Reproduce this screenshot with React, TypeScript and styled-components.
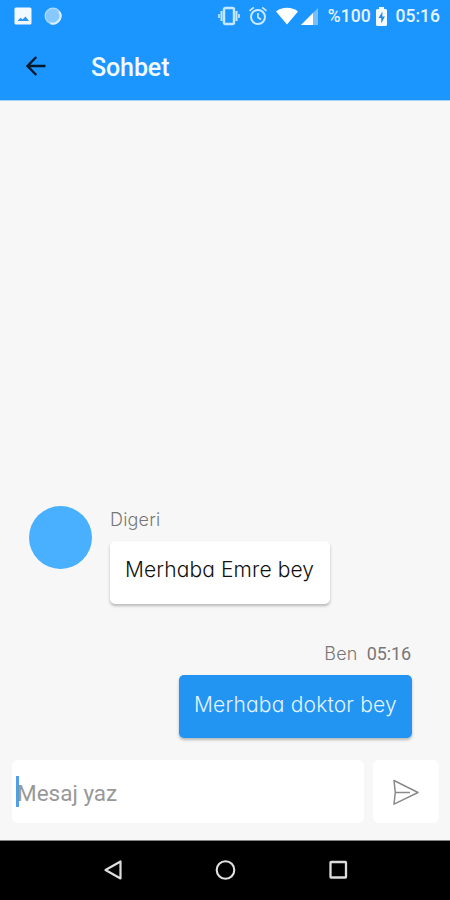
import React from 'react';
import styled, { createGlobalStyle } from 'styled-components';

const GlobalStyle = createGlobalStyle`
  *, *::before, *::after { box-sizing: border-box; }
  body { margin: 0; background: #f7f7f7; }
`;

const Screen = styled.div`
  width: 450px;
  height: 900px;
  display: flex;
  flex-direction: column;
  overflow: hidden;
  background: #f7f7f7;
  font-family: Roboto, 'Liberation Sans', sans-serif;
  svg { display: block; flex: none; }
`;

const Header = styled.header`
  height: 101px;
  flex: none;
  background: #1c96ff;
  border-bottom: 1px solid #a5d4fb;
`;

const StatusBar = styled.div`
  height: 32px;
  display: flex;
  justify-content: space-between;
  padding: 0 10px 0 14px;
  color: #e6f4ff;
`;

const StatusGroup = styled.div`
  display: flex;
  align-items: center;
`;

const StatusIcon = styled.span<{ $gap: number }>`
  margin-right: ${({ $gap }) => $gap}px;
`;

const StatusText = styled.span<{ $gap?: number }>`
  margin-right: ${({ $gap = 0 }) => $gap}px;
  font-size: 17.5px;
  line-height: 32px;
  font-weight: 500;
  white-space: nowrap;
`;

const AppBar = styled.div`
  height: 67px;
  display: flex;
  align-items: center;
  gap: 43px;
  padding: 0 24px;
`;

const BackButton = styled.button`
  padding: 0;
  border: 0;
  background: none;
`;

const Title = styled.h1`
  margin: 0;
  padding-top: 5px;
  font-size: 25px;
  line-height: 32px;
  font-weight: 500;
  letter-spacing: -0.1px;
  color: #f2faff;
`;

const Messages = styled.main`
  flex: 1;
  display: flex;
  flex-direction: column;
  justify-content: flex-end;
  gap: 38px;
  padding: 0 38px 22px 29px;
  font-family: Inter, 'Liberation Sans', sans-serif;
  font-weight: 300;
  font-feature-settings: 'cv11' 1;
`;

const Message = styled.article<{ $mine?: boolean }>`
  display: flex;
  gap: 18px;
  justify-content: ${({ $mine }) => ($mine ? 'flex-end' : 'flex-start')};
`;

const Avatar = styled.div`
  width: 63px;
  height: 63px;
  flex: none;
  border-radius: 50%;
  background: #48b0ff;
`;

const MessageBody = styled.div<{ $mine?: boolean }>`
  display: flex;
  flex-direction: column;
  align-items: ${({ $mine }) => ($mine ? 'flex-end' : 'flex-start')};
`;

const Meta = styled.div<{ $mine?: boolean }>`
  height: ${({ $mine }) => ($mine ? 33 : 35)}px;
  display: flex;
  gap: 9px;
  font-size: 18px;
  line-height: ${({ $mine }) => ($mine ? 24 : 27)}px;
  letter-spacing: 0.2px;
  color: #777;
`;

const Time = styled.time`
  margin-right: 1px;
  font-family: Roboto, sans-serif;
  font-size: 18px;
  font-weight: 400;
  letter-spacing: -0.1px;
`;

const Bubble = styled.div<{ $mine?: boolean }>`
  width: ${({ $mine }) => ($mine ? 233 : 220)}px;
  height: 63px;
  padding-left: 15px;
  border-radius: 5px;
  font-size: 21px;
  line-height: ${({ $mine }) => ($mine ? 59 : 57)}px;
  letter-spacing: ${({ $mine }) => ($mine ? 0.2 : 0.12)}px;
  white-space: nowrap;
  color: ${({ $mine }) => ($mine ? '#e3f4ff' : '#111')};
  background: ${({ $mine }) => ($mine ? '#2295f3' : '#fff')};
  box-shadow: 0 2px 3px rgba(0, 0, 0, 0.26);
`;

const Composer = styled.form`
  height: 80px;
  flex: none;
  display: flex;
  align-items: flex-start;
  gap: 9px;
  padding: 0 11px 0 12px;
`;

const Field = styled.div`
  width: 352px;
  height: 63px;
  display: flex;
  align-items: center;
  padding-left: 4px;
  border-radius: 6px;
  background: #fff;
`;

const Caret = styled.span`
  width: 3px;
  height: 31px;
  margin-right: -2px;
  background: #539ee9;
`;

const Placeholder = styled.span`
  padding-top: 2px;
  font-size: 22.5px;
  line-height: 32px;
  color: #989898;
`;

const SendButton = styled.button`
  width: 66px;
  height: 63px;
  padding: 1px 1px 0 0;
  border: 0;
  border-radius: 6px;
  display: grid;
  place-items: center;
  background: #fff;
`;

const NavBar = styled.nav`
  height: 60px;
  flex: none;
  display: flex;
  justify-content: space-between;
  align-items: center;
  padding: 0 101px 1px 100px;
  border-top: 1px solid #858585;
  background: #000;
`;

const PictureIcon = () => (
  <svg width="18" height="18" viewBox="0 0 18 18">
    <rect x="0.5" y="0.5" width="17" height="17" rx="1.5" fill="#f3faff" />
    <path d="M3.5 14 6.5 10.8l2 1.7 3-3 3.5 4.5Z" fill="#2794f4" />
  </svg>
);

const SyncIcon = () => (
  <svg width="18" height="18" viewBox="0 0 18 18">
    <circle cx="9" cy="9" r="7.8" fill="#86c8ff" stroke="#a9d9ff" strokeWidth="1.4" />
    <path d="M15 4.5a7.6 7.6 0 0 1-8.5 11.7" fill="none" stroke="#d9f1ff" strokeWidth="2" />
  </svg>
);

const VibrateIcon = () => (
  <svg width="22" height="20" viewBox="0 0 22 20" fill="none" stroke="#c5e8ff">
    <rect x="6" y="2" width="10" height="16" rx="1.5" strokeWidth="2.4" />
    <path d="M3.5 5v10M18.5 5v10" strokeWidth="2" />
    <path d="M1 8v4M21 8v4" strokeWidth="1.6" />
  </svg>
);

const AlarmIcon = () => (
  <svg width="20" height="20" viewBox="0 0 20 20" fill="none" stroke="#c9eaff" strokeWidth="2">
    <circle cx="10" cy="11" r="7" />
    <path d="M10 7v4.5l3 2M1.5 4.8 5.8 1.3M18.5 4.8l-4.3-3.5" strokeWidth="1.7" />
  </svg>
);

const WifiIcon = () => (
  <svg width="22" height="18" viewBox="0 0 22 18">
    <path d="M0 4.5C6-.4 16-.4 22 4.5L11 17.5Z" fill="#fff" />
  </svg>
);

const SignalIcon = () => (
  <svg width="17" height="17" viewBox="0 0 17 17">
    <path d="M17 0v17H0Z" fill="#77bffb" />
    <path d="M12 5v12H0Z" fill="#fff" />
  </svg>
);

const BatteryIcon = () => (
  <svg width="11" height="19" viewBox="0 0 11 19">
    <path d="M3 0h5v2h1.5Q11 2 11 3.5v14Q11 19 9.5 19h-8Q0 19 0 17.5v-14Q0 2 1.5 2H3Z" fill="#f4fbff" />
    <path d="M6.5 4.5 2.5 11h2.7v5.5l3.7-7H6.3Z" fill="#2389e6" />
  </svg>
);

const BackArrow = () => (
  <svg width="24" height="24" viewBox="0 0 24 24" fill="none" stroke="#07182a" strokeWidth="2.4">
    <path d="M21.5 12H4M12.3 3 3.5 12l8.8 9" />
  </svg>
);

const SendIcon = () => (
  <svg width="28" height="27" viewBox="0 0 28 27" fill="none" stroke="#8a8a8a" strokeWidth="1.5" strokeLinejoin="round">
    <path d="M2 1.5 26 13.5 2 25.2 3.3 13.4ZM3.3 13.4H18" />
  </svg>
);

const NavBack = () => (
  <svg width="24" height="22" viewBox="0 0 24 22" fill="none" stroke="#ddd" strokeWidth="2.2" strokeLinejoin="round">
    <path d="M20.5 2.5v17L5.5 11Z" />
  </svg>
);

const NavHome = () => (
  <svg width="22" height="22" viewBox="0 0 22 22" fill="none" stroke="#e2e2e2" strokeWidth="2.1">
    <circle cx="10.5" cy="11" r="8.8" />
  </svg>
);

const NavRecent = () => (
  <svg width="22" height="22" viewBox="0 0 22 22" fill="none" stroke="#ddd" strokeWidth="2.3">
    <rect x="3.5" y="3" width="15.5" height="15.5" rx="0.6" />
  </svg>
);

export default function App() {
  return (
    <Screen>
      <GlobalStyle />
      <Header>
        <StatusBar>
          <StatusGroup>
            <StatusIcon $gap={12}><PictureIcon /></StatusIcon>
            <StatusIcon $gap={0}><SyncIcon /></StatusIcon>
          </StatusGroup>
          <StatusGroup>
            <StatusIcon $gap={8}><VibrateIcon /></StatusIcon>
            <StatusIcon $gap={8}><AlarmIcon /></StatusIcon>
            <StatusIcon $gap={3}><WifiIcon /></StatusIcon>
            <StatusIcon $gap={10}><SignalIcon /></StatusIcon>
            <StatusText $gap={5}>%100</StatusText>
            <StatusIcon $gap={9}><BatteryIcon /></StatusIcon>
            <StatusText>05:16</StatusText>
          </StatusGroup>
        </StatusBar>
        <AppBar>
          <BackButton type="button" aria-label="Geri"><BackArrow /></BackButton>
          <Title>Sohbet</Title>
        </AppBar>
      </Header>
      <Messages>
        <Message>
          <Avatar />
          <MessageBody>
            <Meta>Digeri</Meta>
            <Bubble>Merhaba Emre bey</Bubble>
          </MessageBody>
        </Message>
        <Message $mine>
          <MessageBody $mine>
            <Meta $mine>
              <span>Ben</span>
              <Time>05:16</Time>
            </Meta>
            <Bubble $mine>Merhaba doktor bey</Bubble>
          </MessageBody>
        </Message>
      </Messages>
      <Composer>
        <Field>
          <Caret />
          <Placeholder>Mesaj yaz</Placeholder>
        </Field>
        <SendButton type="button" aria-label="Gönder"><SendIcon /></SendButton>
      </Composer>
      <NavBar>
        <NavBack />
        <NavHome />
        <NavRecent />
      </NavBar>
    </Screen>
  );
}
